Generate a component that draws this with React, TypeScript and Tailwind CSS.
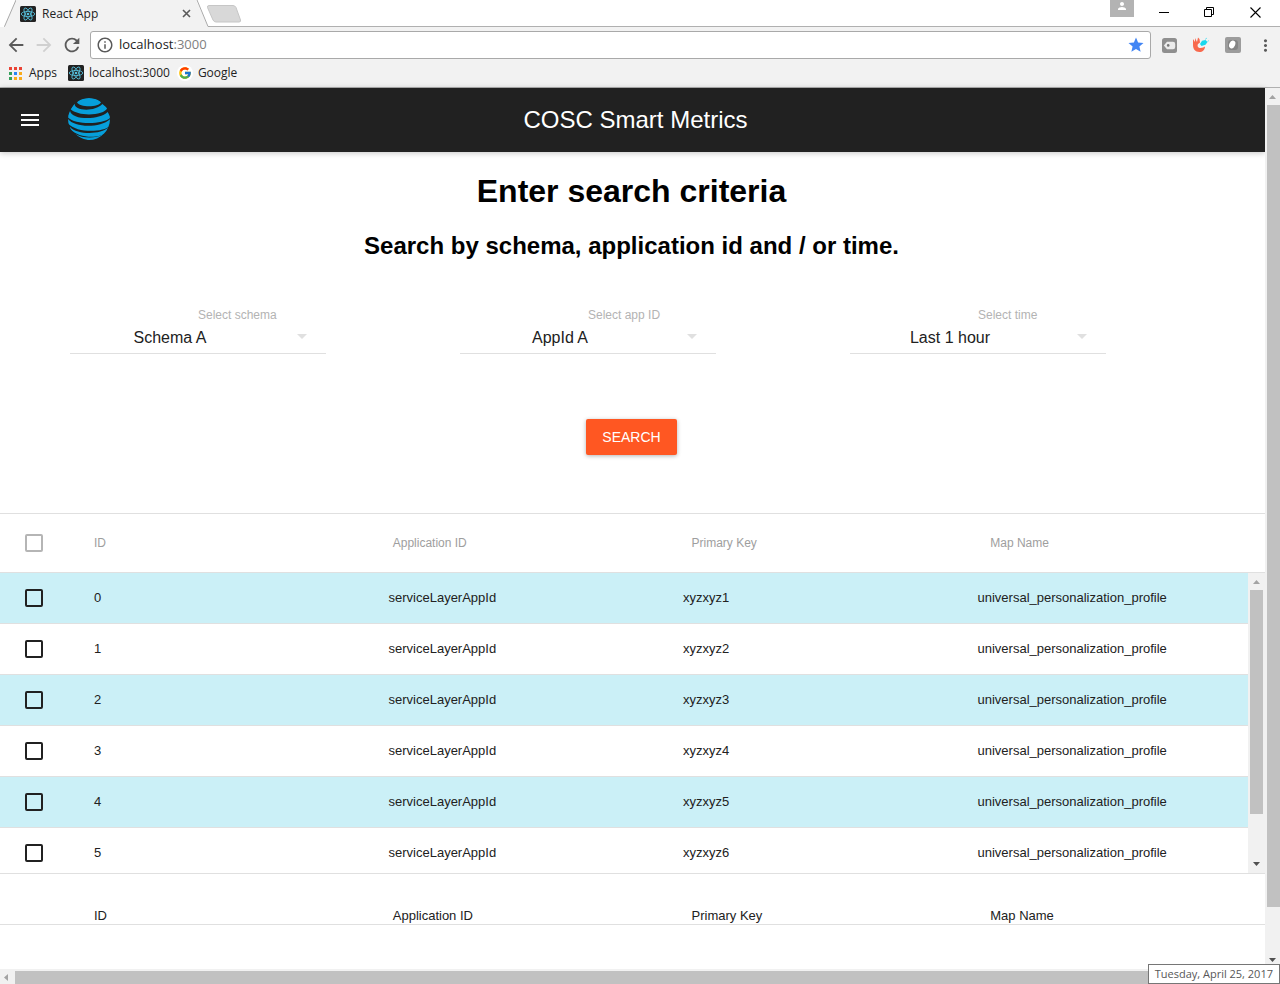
import React from "react";
import { MdArrowBack, MdArrowForward, MdRefresh, MdInfoOutline, MdStar, MdMoreVert, MdPerson, MdMenu } from "react-icons/md";
import { FcGoogle } from "react-icons/fc";

const rows = [0, 1, 2, 3, 4, 5].map((id) => ({
  id,
  app: "serviceLayerAppId",
  key: `xyzxyz${id + 1}`,
  map: "universal_personalization_profile",
}));

const columns = ["ID", "Application ID", "Primary Key", "Map Name"];

const filters = [
  { id: "schema", label: "Select schema", options: ["Schema A", "Schema B"] },
  { id: "app", label: "Select app ID", options: ["AppId A", "AppId B"] },
  { id: "time", label: "Select time", options: ["Last 1 hour", "Last 1 day"] },
];

const appColors = ["#ea4335", "#ea4335", "#ea4335", "#34a05a", "#2a86f5", "#f9ab1a", "#34a05a", "#f9ab1a", "#f9ab1a"];

function ReactBadge() {
  return (
    <svg className="size-4 shrink-0" viewBox="0 0 32 32" aria-hidden="true">
      <rect width="32" height="32" rx="3" fill="#222" />
      <g fill="none" stroke="#56bfdb" strokeWidth="1.7">
        <ellipse cx="16" cy="16" rx="13.5" ry="5.2" />
        <ellipse cx="16" cy="16" rx="13.5" ry="5.2" transform="rotate(60 16 16)" />
        <ellipse cx="16" cy="16" rx="13.5" ry="5.2" transform="rotate(120 16 16)" />
      </g>
      <circle cx="16" cy="16" r="2.6" fill="#56bfdb" />
    </svg>
  );
}

function Globe() {
  return (
    <svg className="size-[42px]" viewBox="0 0 126 126" role="img" aria-label="Globe">
      <clipPath id="disc">
        <circle cx="63" cy="63" r="63" />
      </clipPath>
      <g fill="#069fdb" clipPath="url(#disc)">
        <path d="M27 13 C40 -5 86 -5 99 13 C92 29 34 29 27 13Z" />
        <path d="M20 16 C16 38 78 44 103 18 L118 30 C108 54 30 56 8 34Z" />
        <path d="M6 38 C10 66 92 68 119 42 L128 58 C108 80 18 82 -2 56Z" />
        <path d="M-2 60 C14 90 98 92 128 62 L126 84 C104 104 22 106 -2 74Z" />
        <path d="M6 87 C28 111 98 111 122 88 L114 104 C94 121 34 123 6 92Z" />
        <path d="M22 108 C44 122 82 122 106 109 L94 122 C76 130 46 130 22 108Z" />
      </g>
    </svg>
  );
}

function Arrow({ dir, faded }: { dir: "up" | "down" | "left"; faded?: boolean }) {
  const d = dir === "up" ? "M0 5 L3.5 1 L7 5Z" : dir === "down" ? "M0 1 L3.5 5 L7 1Z" : "M5 0 L1 3.5 L5 7Z";
  return (
    <svg className={dir === "left" ? "h-[7px] w-[6px]" : "h-[6px] w-[7px]"} viewBox={dir === "left" ? "0 0 6 7" : "0 0 7 6"} aria-hidden="true">
      <path d={d} fill={faded ? "#a3a3a3" : "#505050"} />
    </svg>
  );
}

function TabStrip() {
  return (
    <div className="flex h-[27px] items-end bg-white pl-1">
      <div className="z-10 flex h-[27px]">
        <svg className="h-[27px] w-3" viewBox="0 0 12 27" aria-hidden="true">
          <path d="M0 27 L12 0 V27Z" fill="#f2f2f2" />
          <path d="M-4 26.5 H0.5 L12 0" fill="none" stroke="#a9a9a9" />
        </svg>
        <div className="flex w-[180px] items-center bg-[#f2f2f2] pl-1">
          <ReactBadge />
          <span className="ml-1.5 flex-1">React App</span>
          <button aria-label="Close tab" className="mr-[5px]">
            <svg className="size-[9px]" viewBox="0 0 9 9">
              <path d="M1 1 L8 8 M8 1 L1 8" stroke="#5a5a5a" strokeWidth="1.6" />
            </svg>
          </button>
        </div>
        <svg className="h-[27px] w-[14px]" viewBox="0 0 14 27" aria-hidden="true">
          <path d="M0 0 L12 27 H0Z" fill="#f2f2f2" />
          <path d="M1 0 L12 26.5 H14" fill="none" stroke="#a9a9a9" />
        </svg>
      </div>
      <div className="flex h-[27px] flex-1 items-start justify-between border-b border-[#b0b0b0]">
        <button aria-label="New tab" className="-ml-1 mt-[5px]">
          <svg className="h-[18px] w-9" viewBox="0 0 36 18">
            <path d="M3 .5 H27 Q29 .5 30 2.5 L34.5 15 Q35 17 33 17 H10 Q8 17 7 15 L1.5 2.5 Q1 .5 3 .5Z" fill="#d8d8d8" stroke="#c6c6c6" />
          </svg>
        </button>
        <div className="flex items-start">
          <button aria-label="Profile" className="flex h-[17px] w-6 justify-center bg-[#b3b3b3] text-white">
            <MdPerson className="size-3" />
          </button>
          <button aria-label="Minimize" className="ml-[25px] mt-[7px]">
            <svg className="size-[11px]" viewBox="0 0 11 11"><path d="M0 5.5 H10" stroke="#000" /></svg>
          </button>
          <button aria-label="Restore" className="ml-[34px] mt-[7px]">
            <svg className="size-[11px]" viewBox="0 0 11 11"><path d="M.5 2.5 H7.5 V9.5 H.5Z M2.5 2.5 V.5 H9.5 V7.5 H7.5" fill="none" stroke="#000" /></svg>
          </button>
          <button aria-label="Close" className="ml-[35px] mr-[19px] mt-[7px]">
            <svg className="size-[11px]" viewBox="0 0 11 11"><path d="M.5 .5 L10.5 10.5 M10.5 .5 L.5 10.5" stroke="#000" strokeWidth="1.1" /></svg>
          </button>
        </div>
      </div>
    </div>
  );
}

function AddressBar() {
  return (
    <div className="flex h-9 items-center bg-[#f2f2f2] px-[5px] text-[#5a5a5a]">
      <button aria-label="Back"><MdArrowBack className="size-[22px]" /></button>
      <button aria-label="Forward" className="ml-1.5 text-[#d0d0d0]"><MdArrowForward className="size-[22px]" /></button>
      <button aria-label="Reload" className="ml-1.5"><MdRefresh className="size-[22px]" /></button>
      <div className="ml-[7px] flex h-7 min-w-0 flex-1 items-center rounded-[3px] border border-[#a9a9a9] bg-white px-[5px]">
        <MdInfoOutline className="size-[18px]" />
        <p className="ml-[5px] flex-1 text-[13px] text-[#222]">
          localhost<span className="text-[#808080]">:3000</span>
        </p>
        <MdStar className="size-[18px] text-[#4285f4]" />
      </div>
      <button aria-label="Tag extension" className="ml-[11px]">
        <svg className="size-[15px]" viewBox="0 0 15 15">
          <rect width="15" height="15" rx="2.5" fill="#8f8f8f" />
          <path d="M1.8 7.5 L5 3.8 H11 Q13.200 3.800 13.2 6 V9 Q13.2 11.2 11 11.2 H5Z" fill="#ececec" />
          <circle cx="6.2" cy="7.4" r="1.3" fill="#777" />
        </svg>
      </button>
      <button aria-label="Hand extension" className="ml-[15px]">
        <svg className="size-[18px]" viewBox="0 0 18 18">
          <path d="M1 3 L3 6 L3 2 L5 6 L6 1.500 L7.500 3 L8 6.500 L6 8 C5 10 6 12 8.500 12 C10.500 12 12 11 13 10.500 C13 14 10.500 16 7.500 16 C3 16 1 13 1 9Z" fill="#f8694d" />
          <path d="M8 8 L10 4.800 L13.500 4 L15.500 6 L13.500 8.800 L9.500 10Z" fill="#18d8ee" />
          <path d="M13 3.500 L15 2 M15.500 5.500 L17 4.500" stroke="#6fe4f2" />
        </svg>
      </button>
      <button aria-label="Leaf extension" className="ml-[15px]">
        <svg className="size-4" viewBox="0 0 16 16">
          <rect width="16" height="16" rx="2" fill="#9c9c9c" />
          <rect x="3" y="3" width="10" height="10" rx="3" fill="#858585" />
          <ellipse cx="7.2" cy="7.5" rx="2.9" ry="4" fill="#fff" transform="rotate(25 7.2 7.5)" />
        </svg>
      </button>
      <button aria-label="Menu" className="ml-[15px]"><MdMoreVert className="size-[19px]" /></button>
    </div>
  );
}

function Bookmarks() {
  return (
    <nav className="flex h-[25px] items-start border-b border-[#b0b0b0] bg-[#f2f2f2] pl-[9px]">
      <a href="#apps" className="flex h-5 items-center">
        <svg className="size-[13px]" viewBox="0 0 13 13" aria-hidden="true">
          {appColors.map((c, i) => (
            <rect key={i} x={(i % 3) * 5} y={Math.floor(i / 3) * 5} width="3" height="3" fill={c} />
          ))}
        </svg>
        <span className="ml-[7px]">Apps</span>
      </a>
      <a href="#local" className="ml-[11px] flex h-5 items-center">
        <ReactBadge />
        <span className="ml-[5px]">localhost:3000</span>
      </a>
      <a href="#google" className="ml-[7px] flex h-5 items-center">
        <span className="flex size-4 items-center justify-center rounded-full bg-white"><FcGoogle className="size-[14px]" /></span>
        <span className="ml-[5px]">Google</span>
      </a>
    </nav>
  );
}

function Columns() {
  return (
    <colgroup>
      <col className="w-[70px]" />
      <col />
      <col />
      <col />
      <col />
    </colgroup>
  );
}

export default function App() {
  return (
    <div className="flex min-h-screen flex-col bg-white font-['Liberation_Sans',Arial,sans-serif] text-black">
      <header className="font-['Open_Sans','Noto_Sans',sans-serif] text-[12px] text-[#222]">
        <TabStrip />
        <AddressBar />
        <Bookmarks />
      </header>

      <div className="flex flex-1">
        <main className="min-w-0 flex-1">
          <div className="grid h-16 grid-cols-[1fr_auto_1fr] items-center bg-[#212121] pl-1.5 text-white shadow-[0_1px_6px_rgba(0,0,0,0.24)]">
            <div className="flex items-center pl-3">
              <button aria-label="Open menu"><MdMenu className="size-6" /></button>
              <span className="ml-[26px] pb-0.5"><Globe /></span>
            </div>
            <p className="text-[24px]">COSC Smart Metrics</p>
          </div>

          <section className="flex flex-col items-center pt-5">
            <h1 className="pr-0.5 text-[32px] font-bold leading-[38px]">Enter search criteria</h1>
            <h2 className="mt-[22px] pr-0.5 text-[24px] font-bold leading-7">Search by schema, application id and / or time.</h2>
            <div className="mt-[45px] grid w-full grid-cols-3 pl-[70px] pr-[25px]">
              {filters.map((f) => (
                <div key={f.id} className="flex w-64 flex-col">
                  <label htmlFor={f.id} className="pl-32 text-[12px] leading-5 text-[#b3b3b3]">{f.label}</label>
                  <div className="relative">
                    <select id={f.id} className="h-[29px] w-full appearance-none border-b border-[#e0e0e0] bg-transparent pb-[3px] pr-14 text-[16px] text-[#212121] [text-align-last:center]">
                      {f.options.map((o) => <option key={o}>{o}</option>)}
                    </select>
                    <svg className="pointer-events-none absolute right-[19px] top-[9px] h-[5px] w-[10px]" viewBox="0 0 10 5" aria-hidden="true">
                      <path d="M0 0 H10 L5 5Z" fill="#e0e0e0" />
                    </svg>
                  </div>
                </div>
              ))}
            </div>
            <div className="mt-[65px] flex pr-0.5">
              <button className="h-9 rounded-xs bg-[#ff5722] px-4 text-[14px] text-white shadow-[0_1px_4px_rgba(0,0,0,0.3)]">SEARCH</button>
            </div>
          </section>

          <section className="mt-[58px] border-t border-[#e0e0e0] text-left">
            <table className="w-full table-fixed border-separate border-spacing-0">
              <Columns />
              <thead>
                <tr className="h-[59px] text-[12px] text-[#9e9e9e] *:border-b *:border-[#e0e0e0]">
                  <th className="pl-[25px]"><input type="checkbox" aria-label="Select all" className="block size-[18px] appearance-none rounded-xs border-2 border-[#b5b5b5]" /></th>
                  {columns.map((c) => <th key={c} className="px-6 font-normal">{c}</th>)}
                </tr>
              </thead>
            </table>
            <div className="flex h-[301px] overflow-hidden border-b border-[#e0e0e0]">
              <div className="min-w-0 flex-1">
                <table className="w-full table-fixed border-separate border-spacing-0">
                  <Columns />
                  <tbody>
                    {rows.map((r) => (
                      <tr key={r.id} className="h-[51px] text-[13px] text-[#212121] odd:bg-[#cbf0f7] *:border-b *:border-[#e0e0e0]">
                        <td className="pl-[25px]"><input type="checkbox" aria-label={`Select row ${r.id}`} className="block size-[18px] appearance-none rounded-xs border-2 border-[#212121]" /></td>
                        <td className="px-6">{r.id}</td>
                        <td className="px-6">{r.app}</td>
                        <td className="px-6">{r.key}</td>
                        <td className="px-6">{r.map}</td>
                      </tr>
                    ))}
                  </tbody>
                </table>
              </div>
              <div className="flex w-[17px] flex-col items-center bg-[#f1f1f1]">
                <span className="flex h-[17px] items-center"><Arrow dir="up" faded /></span>
                <span className="h-56 w-[13px] bg-[#c1c1c1]" />
                <span className="mt-auto flex h-[19px] items-center"><Arrow dir="down" /></span>
              </div>
            </div>
            <table className="w-full table-fixed border-separate border-spacing-0">
              <Columns />
              <tfoot>
                <tr className="h-[51px] text-[13px] text-[#212121] *:border-b *:border-[#e0e0e0]">
                  <td />
                  {columns.map((c) => <td key={c} className="px-6 align-bottom leading-4">{c}</td>)}
                </tr>
              </tfoot>
            </table>
          </section>
        </main>
        <div className="flex w-[15px] flex-col items-end bg-[#f1f1f1]">
          <span className="flex h-[17px] items-center pr-1"><Arrow dir="up" faded /></span>
          <span className="h-[802px] w-[13px] bg-[#c1c1c1]" />
          <span className="mt-auto flex h-[19px] items-center pr-1"><Arrow dir="down" /></span>
        </div>
      </div>

      <div className="flex h-[15px] items-end bg-[#f1f1f1]">
        <span className="flex h-[13px] w-[15px] items-center pl-[3px]"><Arrow dir="left" faded /></span>
        <span className="h-[13px] flex-1 bg-[#c1c1c1]" />
      </div>
      <div role="tooltip" className="fixed bottom-0 right-0 flex h-5 items-center border border-[#767676] bg-white px-1.5 font-['Open_Sans','Noto_Sans',sans-serif] text-[11px] text-[#575757]">
        Tuesday, April 25, 2017
      </div>
    </div>
  );
}
